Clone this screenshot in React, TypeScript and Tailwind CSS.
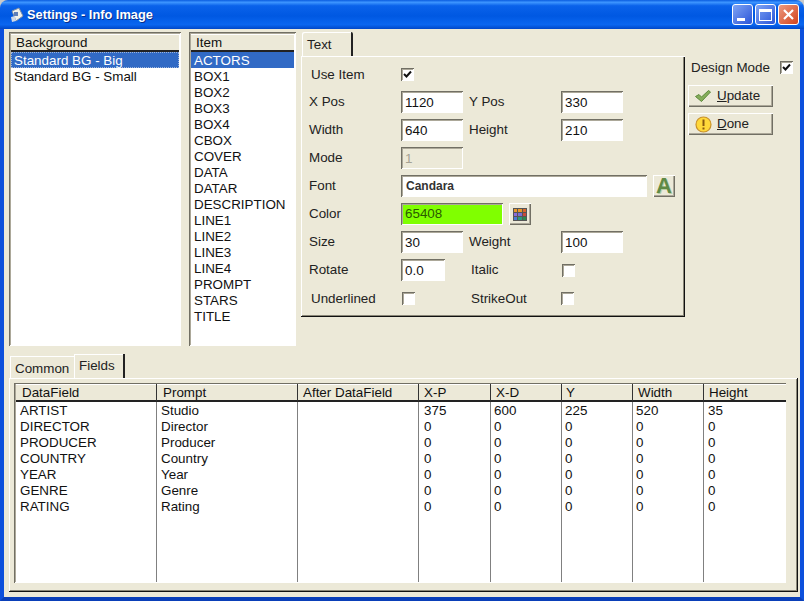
const FONT = "font-['Liberation_Sans',Arial,sans-serif]";
const SUNKEN = "shadow-[inset_1px_1px_0_#716f64,inset_-1px_-1px_0_#ffffff,inset_2px_2px_0_#aca899]";
const RAISED = "shadow-[inset_1px_1px_0_#ffffff,inset_-1px_-1px_0_#716f64,inset_-2px_-2px_0_#aca899]";

const ITEMS = ["ACTORS", "BOX1", "BOX2", "BOX3", "BOX4", "CBOX", "COVER", "DATA", "DATAR", "DESCRIPTION", "LINE1", "LINE2", "LINE3", "LINE4", "PROMPT", "STARS", "TITLE"];

const COLS = [
  { name: "DataField", w: "w-[141px]", head: "pl-[6px]", cell: "pl-[4px]" },
  { name: "Prompt", w: "w-[141px]", head: "pl-[6px]", cell: "pl-[4px]" },
  { name: "After DataField", w: "w-[121px]", head: "pl-[5px]", cell: "pl-[3px]" },
  { name: "X-P", w: "w-[72px]", head: "pl-[5px]", cell: "pl-[5px]" },
  { name: "X-D", w: "w-[71px]", head: "pl-[5px]", cell: "pl-[3px]" },
  { name: "Y", w: "w-[71px]", head: "pl-[4px]", cell: "pl-[3px]" },
  { name: "Width", w: "w-[71px]", head: "pl-[5px]", cell: "pl-[3px]" },
  { name: "Height", w: "w-[84px]", head: "pl-[5px]", cell: "pl-[4px]" },
];

const ROWS = [
  ["ARTIST", "Studio", "", "375", "600", "225", "520", "35"],
  ["DIRECTOR", "Director", "", "0", "0", "0", "0", "0"],
  ["PRODUCER", "Producer", "", "0", "0", "0", "0", "0"],
  ["COUNTRY", "Country", "", "0", "0", "0", "0", "0"],
  ["YEAR", "Year", "", "0", "0", "0", "0", "0"],
  ["GENRE", "Genre", "", "0", "0", "0", "0", "0"],
  ["RATING", "Rating", "", "0", "0", "0", "0", "0"],
];

function Check({ on }: { on?: boolean }) {
  return (
    <span className={`flex h-[13px] w-[13px] shrink-0 items-center justify-center bg-white ${SUNKEN}`}>
      {on && (
        <svg width="9" height="9" viewBox="0 0 9 9">
          <path d="M1 4 L3.5 6.5 L8 1.5" fill="none" stroke="#111" strokeWidth="2" />
        </svg>
      )}
    </span>
  );
}

function Field({ w, children, muted }: { w: string; children?: React.ReactNode; muted?: boolean }) {
  return (
    <span className={`flex h-[22px] shrink-0 items-center pl-[4px] pt-[3px] ${w} ${muted ? "bg-[#ece9d8] text-[#a5a294]" : "bg-white text-[#111]"} ${SUNKEN}`}>
      {children}
    </span>
  );
}

function Header({ title }: { title: string }) {
  return (
    <div className="flex h-[18px] w-full shrink-0 items-center border-b-2 border-b-[#222] bg-[#ece9d8] pl-[5px] pt-[2px] shadow-[inset_0_1px_0_#ffffff]">
      {title}
    </div>
  );
}

function ToolButton({ label, icon }: { label: string; icon: React.ReactNode }) {
  const [first, ...rest] = label;
  return (
    <button className={`flex h-[22px] w-[85px] items-center bg-[#ece9d8] pl-[2px] text-[#222] ${RAISED}`}>
      <span className="flex w-[26px] justify-center">{icon}</span>
      <span className="ml-[1px]"><span className="underline">{first}</span>{rest.join("")}</span>
    </button>
  );
}

function LeftList({ children, w }: { children: React.ReactNode; w: string }) {
  return <div className={`flex h-[314px] flex-col overflow-hidden bg-white p-[2px] pb-0 text-[#111] ${SUNKEN} ${w}`}>{children}</div>;
}

function Row({ children }: { children: React.ReactNode }) {
  return <div className="flex h-[28px] items-center">{children}</div>;
}

function Label({ children, w = "w-[100px]", x = "pl-[8px]" }: { children: React.ReactNode; w?: string; x?: string }) {
  return <span className={`shrink-0 ${w} ${x}`}>{children}</span>;
}

export default function App() {
  return (
    <div className={`flex h-[601px] w-[804px] flex-col overflow-hidden bg-[#c9c9c9] text-[13.4px] text-[#222] ${FONT}`}>
      {/* title bar */}
      <div className="flex h-[29px] shrink-0 items-center rounded-t-[8px] bg-[linear-gradient(180deg,#0a5ce0_0%,#3d95ff_8%,#0a62ea_20%,#0058e2_55%,#0a66f0_85%,#0047c8_100%)] pl-[9px] pr-[5px]">
        <svg width="16" height="16" viewBox="0 0 16 16" className="mr-[2px]">
          <path d="M3 4 L10 1 L14 9 L7 14 Z" fill="#f2f2ea" stroke="#7d8fa8" />
          <rect x="5" y="5" width="4" height="4" fill="#5f7fb8" />
          <path d="M2 10 L6 9 L7 14 L3 15 Z" fill="#cfd8e6" />
        </svg>
        <span className="pt-[1px] text-[12.8px] font-bold text-white [text-shadow:1px_1px_0_#0a2f8a]">Settings - Info Image</span>
        <div className="ml-auto flex gap-[2px]">
          <span className="flex h-[21px] w-[21px] items-end rounded-[3px] border border-white bg-[linear-gradient(135deg,#7fa4f4,#2a55d8)] pb-[3px] pl-[4px]">
            <span className="h-[3px] w-[8px] bg-white" />
          </span>
          <span className="flex h-[21px] w-[21px] items-center justify-center rounded-[3px] border border-white bg-[linear-gradient(135deg,#7fa4f4,#2a55d8)]">
            <span className="h-[12px] w-[13px] border border-t-[3px] border-white" />
          </span>
          <span className="flex h-[21px] w-[21px] items-center justify-center rounded-[3px] border border-white bg-[linear-gradient(135deg,#ec9a80,#d2431c)]">
            <svg width="13" height="13" viewBox="0 0 13 13">
              <path d="M2 2 L11 11 M11 2 L2 11" stroke="#fff" strokeWidth="2.2" />
            </svg>
          </span>
        </div>
      </div>

      {/* client area */}
      <div className="flex min-h-0 flex-1 flex-col border-x-[4px] border-b-[4px] border-x-[#0d50dc] border-b-[#0a3fb8] bg-[#ece9d8] pl-[5px] pt-[3px] shadow-[0_1px_0_#8a8a8a]">
        <div className="flex h-[314px] shrink-0">
          <LeftList w="w-[172px]">
            <Header title="Background" />
            <div className="h-[16px] shrink-0 border border-dotted border-[#9db4dc] bg-[#316ac5] pl-[2px] leading-[15px] text-white">Standard BG - Big</div>
            <div className="h-[16px] shrink-0 pl-[3px] leading-[18px]">Standard BG - Small</div>
          </LeftList>

          <div className="ml-[8px]">
            <LeftList w="w-[107px]">
              <Header title="Item" />
              {ITEMS.map((it, i) => (
                <div key={it} className={`h-[16px] shrink-0 pl-[3px] leading-[18px] ${i === 0 ? "bg-[#316ac5] text-white" : ""}`}>{it}</div>
              ))}
            </LeftList>
          </div>

          {/* Text tab panel */}
          <div className="ml-[5px] w-[384px]">
            <div className="flex h-[25px] items-end border-b border-b-white">
              <div className="ml-[1px] flex h-[24px] w-[51px] items-center rounded-t-[2px] border-r-2 border-r-[#222] pl-[5px] pt-[2px] shadow-[inset_1px_1px_0_#ffffff]">Text</div>
            </div>
            <div className="h-[260px] border-r border-b border-r-[#111] border-b-[#111] pt-[3px] shadow-[inset_1px_0_0_#ffffff,inset_-1px_-1px_0_#8a8778]">
              <Row>
                <Label x="pl-[10px] pt-[2px]">Use Item</Label>
                <Check on />
              </Row>
              <Row>
                <Label>X Pos</Label>
                <Field w="w-[62px]">1120</Field>
                <Label w="w-[98px]" x="pl-[6px]">Y Pos</Label>
                <Field w="w-[62px]">330</Field>
              </Row>
              <Row>
                <Label>Width</Label>
                <Field w="w-[62px]">640</Field>
                <Label w="w-[98px]" x="pl-[6px]">Height</Label>
                <Field w="w-[62px]">210</Field>
              </Row>
              <Row>
                <Label>Mode</Label>
                <Field w="w-[62px]" muted>1</Field>
              </Row>
              <Row>
                <Label>Font</Label>
                <Field w="w-[246px]"><span className="pb-[3px] pl-[1px] text-[12px] font-bold text-[#333]">Candara</span></Field>
                <span className={`ml-[6px] flex h-[22px] w-[22px] items-center justify-center bg-[#ece9d8] text-[22px] font-bold leading-none text-[#5f8a45] [text-shadow:1px_1px_0_#b9cfa4] ${RAISED}`}>A</span>
              </Row>
              <Row>
                <Label>Color</Label>
                <span className={`flex h-[22px] w-[102px] items-center bg-[#80ff00] pl-[4px] pt-[1px] text-[#2a5a00] ${SUNKEN}`}>65408</span>
                <span className={`ml-[6px] flex h-[22px] w-[22px] items-center justify-center bg-[#ece9d8] ${RAISED}`}>
                  <svg width="14" height="13" viewBox="0 0 14 13">
                    <rect x="0" y="0" width="14" height="13" fill="#555" />
                    <rect x="1" y="1" width="3" height="3" fill="#e8962a" />
                    <rect x="5" y="1" width="4" height="3" fill="#e8962a" />
                    <rect x="10" y="1" width="3" height="3" fill="#d8662a" />
                    <rect x="1" y="5" width="3" height="3" fill="#8a6cd8" />
                    <rect x="5" y="5" width="4" height="3" fill="#7a6cd0" />
                    <rect x="10" y="5" width="3" height="3" fill="#c84a3a" />
                    <rect x="1" y="9" width="3" height="3" fill="#4a7ad8" />
                    <rect x="5" y="9" width="4" height="3" fill="#2a9a7a" />
                    <rect x="10" y="9" width="3" height="3" fill="#2a8a4a" />
                  </svg>
                </span>
              </Row>
              <Row>
                <Label>Size</Label>
                <Field w="w-[62px]">30</Field>
                <Label w="w-[98px]" x="pl-[6px]">Weight</Label>
                <Field w="w-[62px]">100</Field>
              </Row>
              <Row>
                <Label>Rotate</Label>
                <Field w="w-[44px]">0.0</Field>
                <Label w="w-[117px]" x="pl-[26px]">Italic</Label>
                <Check />
              </Row>
              <Row>
                <Label w="w-[101px]" x="pl-[10px] pt-[2px]">Underlined</Label>
                <Check />
                <Label w="w-[146px]" x="pl-[56px] pt-[2px]">StrikeOut</Label>
                <Check />
              </Row>
            </div>
          </div>

          {/* right column */}
          <div className="ml-[3px] flex flex-col pt-[28px]">
            <div className="flex h-[14px] w-[107px] items-center justify-between pl-[3px] pr-[2px]">
              <span className="pt-[2px]">Design Mode</span>
              <Check on />
            </div>
            <div className="mt-[11px] flex flex-col gap-[6px]">
              <ToolButton
                label="Update"
                icon={
                  <svg width="18" height="14" viewBox="0 0 18 14">
                    <path d="M1.5 7.5 L5 5.5 L7.5 8 L14.5 1.5 L16.5 3 L7.5 12.5 Z" fill="#85ad5a" stroke="#5d8a3c" strokeWidth="1" />
                  </svg>
                }
              />
              <ToolButton
                label="Done"
                icon={
                  <svg width="17" height="17" viewBox="0 0 17 17">
                    <circle cx="8.5" cy="8.5" r="7.5" fill="#ffd83a" stroke="#c9922a" strokeWidth="1.2" />
                    <rect x="7.5" y="3.5" width="2" height="6.5" fill="#8a5a10" />
                    <rect x="7.5" y="11.5" width="2" height="2" fill="#8a5a10" />
                  </svg>
                }
              />
            </div>
          </div>
        </div>

        {/* bottom tabs */}
        <div className="mt-[8px] flex h-[24px] shrink-0 items-end pl-[1px]">
          <div className="flex h-[22px] w-[64px] items-center pl-[5px] pt-[4px] shadow-[inset_1px_1px_0_#ffffff]">Common</div>
          <div className="flex h-[24px] w-[51px] items-center border-r-2 border-r-[#222] pl-[5px] shadow-[inset_1px_1px_0_#ffffff]">Fields</div>
        </div>

        <div className="h-[214px] w-[789px] shrink-0 border-r border-b border-r-[#111] border-b-[#111] pl-[5px] pt-[5px] shadow-[inset_1px_1px_0_#ffffff,inset_-1px_-1px_0_#8a8778]">
          <div className={`flex h-[200px] w-[772px] overflow-hidden bg-white p-[1px] pl-[2px] text-[#111] ${SUNKEN}`}>
            {COLS.map((c, i) => (
              <div key={c.name} className={`flex h-full shrink-0 flex-col ${c.w}`}>
                <div className={`flex h-[18px] shrink-0 items-center border-b-2 border-b-[#222] bg-[#ece9d8] pt-[2px] shadow-[inset_0_1px_0_#ffffff] ${c.head} ${i < COLS.length - 1 ? "border-r border-r-[#333]" : ""}`}>{c.name}</div>
                <div className={`flex-1 ${i < COLS.length - 1 ? "border-r border-r-[#808080]" : ""}`}>
                  {ROWS.map((r) => (
                    <div key={r[0]} className={`h-[16px] leading-[18px] ${c.cell}`}>{r[i]}</div>
                  ))}
                </div>
              </div>
            ))}
          </div>
        </div>
      </div>
    </div>
  );
}
